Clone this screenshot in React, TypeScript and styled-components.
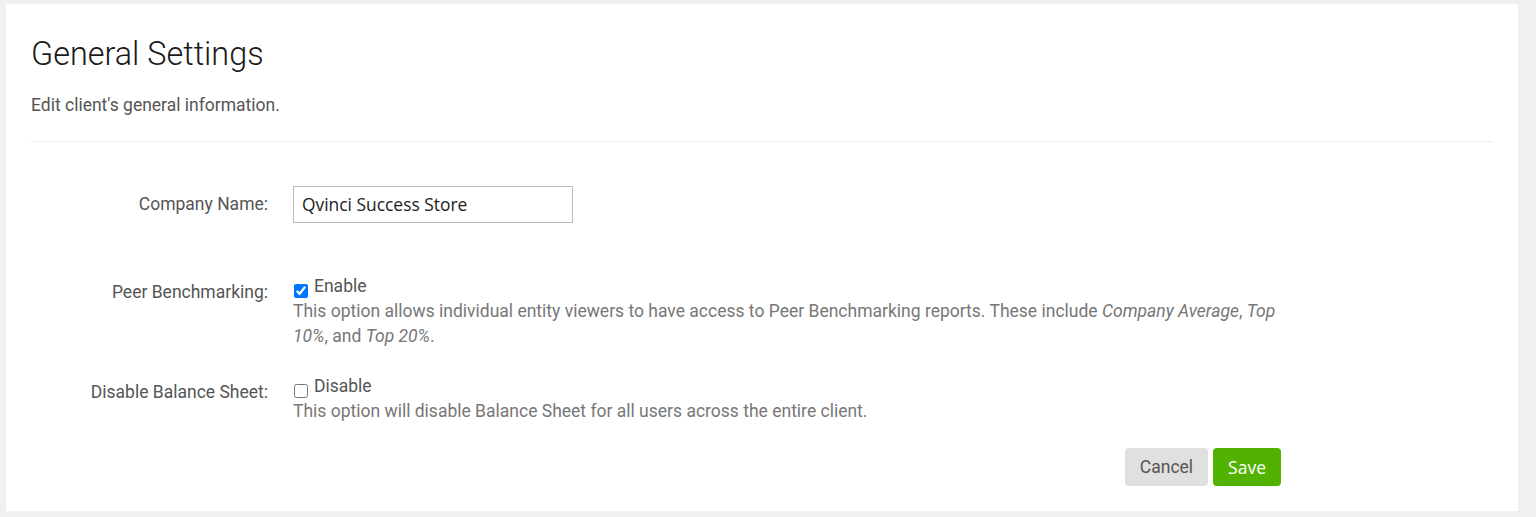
import React from "react";
import styled, { createGlobalStyle } from "styled-components";

const Global = createGlobalStyle`
  html, body { margin: 0; padding: 0; background: #f0f0f0; }
  body { font-family: Roboto, "Liberation Sans", sans-serif; }
  * { box-sizing: border-box; }
`;

const Page = styled.div`
  padding: 4px 18px 6px 6px;
`;

const Card = styled.div`
  background: #fff;
  height: 507px;
  padding: 20px 25px 0 25px;
`;

const Title = styled.h1`
  margin: 13px 0 0 0;
  font-family: Roboto, sans-serif;
  font-weight: 300;
  font-size: 32.4px;
  line-height: 35px;
  color: #1a1a1a;
`;

const Subtitle = styled.p`
  margin: 22px 0 0 0;
  font-size: 17.5px;
  line-height: 22px;
  color: #555;
`;

const Divider = styled.hr`
  margin: 25px 0 0 0;
  border: 0;
  border-top: 1px solid #eee;
`;

const Form = styled.div`
  width: 1250px;
  display: flex;
  flex-direction: column;
`;

const Row = styled.div<{ $top: number; $center?: boolean }>`
  display: grid;
  grid-template-columns: 237px 988px;
  column-gap: 25px;
  margin-top: ${(p) => p.$top}px;
  align-items: ${(p) => (p.$center ? "center" : "start")};
`;

const Label = styled.label<{ $pad?: number }>`
  text-align: right;
  font-size: 17.5px;
  line-height: 25px;
  color: #555;
  padding-top: ${(p) => p.$pad ?? 0}px;
`;

const TextInput = styled.input`
  width: 280px;
  height: 37px;
  border: 1px solid #bbb;
  padding: 0 8px 1px 8px;
  font-family: "Open Sans", sans-serif;
  font-size: 17.4px;
  color: #222;
  outline: none;
`;

const CheckLine = styled.label`
  display: flex;
  align-items: flex-start;
  font-size: 17.5px;
  line-height: 25px;
  color: #555;
`;

const Check = styled.input`
  width: 14px;
  height: 14px;
  margin: 10px 6px 0 1px;
  accent-color: #0075ff;
`;

const Help = styled.div`
  font-size: 17.5px;
  line-height: 25px;
  color: #777;
  em { font-style: italic; }
`;

const Actions = styled.div`
  display: flex;
  justify-content: flex-end;
  gap: 5px;
  margin-top: 24px;
`;

const Button = styled.button<{ $primary?: boolean }>`
  height: 38px;
  border: 0;
  border-radius: 4px;
  padding: 0 15px;
  font-family: ${(p) => (p.$primary ? '"Open Sans", sans-serif' : "Roboto, sans-serif")};
  font-size: 17.5px;
  background: ${(p) => (p.$primary ? "#52b202" : "#e0e0e0")};
  color: ${(p) => (p.$primary ? "#fff" : "#555")};
  cursor: pointer;
`;

export default function App() {
  return (
    <>
      <Global />
      <Page>
        <Card>
          <Title>General Settings</Title>
          <Subtitle>Edit client's general information.</Subtitle>
          <Divider />
          <Form>
            <Row $top={44} $center>
              <Label>Company Name:</Label>
              <TextInput defaultValue="Qvinci Success Store" />
            </Row>
            <Row $top={51}>
              <Label $pad={6}>Peer Benchmarking:</Label>
              <div>
                <CheckLine>
                  <Check type="checkbox" defaultChecked />
                  Enable
                </CheckLine>
                <Help>
                  This option allows individual entity viewers to have access to Peer
                  Benchmarking reports. These include <em>Company Average</em>,{" "}
                  <em>Top 10%</em>, and <em>Top 20%</em>.
                </Help>
              </div>
            </Row>
            <Row $top={25}>
              <Label $pad={6}>Disable Balance Sheet:</Label>
              <div>
                <CheckLine>
                  <Check type="checkbox" />
                  Disable
                </CheckLine>
                <Help>
                  This option will disable Balance Sheet for all users across the entire
                  client.
                </Help>
              </div>
            </Row>
            <Actions>
              <Button>Cancel</Button>
              <Button $primary>Save</Button>
            </Actions>
          </Form>
        </Card>
      </Page>
    </>
  );
}
